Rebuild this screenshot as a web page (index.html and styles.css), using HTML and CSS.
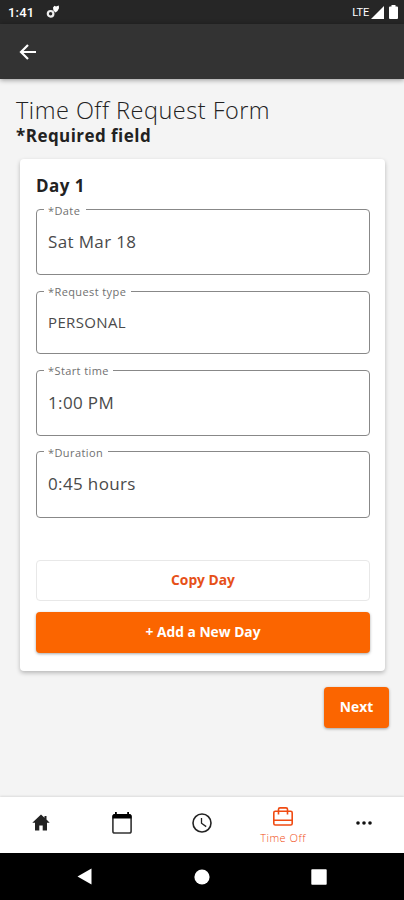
FILE: index.html
```html
<!DOCTYPE html>
<html lang="en">
<head>
<meta charset="utf-8">
<title>Time Off Request Form</title>
<link rel="stylesheet" href="styles.css">
</head>
<body>
<div class="screen">
  <div class="status">
    <span class="clock">1:41</span>
    <svg class="status-app" width="14" height="14" viewBox="0 0 14 14"><circle cx="4.600" cy="8.800" r="2.800" fill="none" stroke="#eee" stroke-width="2.200"/><path d="M7 2.500 8.500.8l1.500.7L12.800.6l.2 2.600L11.500 6l-2 1.500L7.400 5.400Z" fill="#fff"/></svg>
    <span class="lte">LTE</span>
    <svg class="signal" width="13" height="13" viewBox="0 0 13 13"><path d="M13 0v13H0Z" fill="#fff"/></svg>
    <svg class="battery" width="9" height="14" viewBox="0 0 9 14"><path d="M2.500 0h4v1.400H8q1 0 1 1V13q0 1-1 1H1q-1 0-1-1V2.400q0-1 1-1h1.500Z" fill="#fff"/></svg>
  </div>
  <header class="appbar">
    <svg width="18" height="16" viewBox="0 0 18 16" fill="none" stroke="#fff" stroke-width="2.200"><path d="M17 8H2M9 1 2 8l7 7"/></svg>
  </header>
  <main class="content">
    <h1 class="title">Time Off Request Form</h1>
    <p class="required">*Required field</p>
    <section class="card">
      <h2 class="day">Day 1</h2>
      <div class="field date"><span class="label">*Date</span><span class="value">Sat Mar 18</span></div>
      <div class="field type"><span class="label">*Request type</span><span class="value">PERSONAL</span></div>
      <div class="field start"><span class="label">*Start time</span><span class="value">1:00 PM</span></div>
      <div class="field duration"><span class="label">*Duration</span><span class="value">0:45 hours</span></div>
      <button class="btn copy">Copy Day</button>
      <button class="btn solid">+ Add a New Day</button>
    </section>
    <button class="btn solid next">Next</button>
  </main>
  <nav class="tabs">
    <a class="tab"><svg width="18" height="17" viewBox="0 0 18 17"><path d="M9 .5.3 8.700H3v7.800h4.300v-5h3.400v5H15V8.700h2.700L14.500 5.600V2h-2v1.700Z" fill="#222"/></svg></a>
    <a class="tab"><svg width="20" height="22" viewBox="0 0 20 22"><rect x=".9" y="3" width="18.200" height="18" rx="1.800" fill="none" stroke="#333" stroke-width="1.600"/><path d="M.5 6.500V4q0-2 2-2H3V0h1.800v2h10.400V0H17v2h.5q2 0 2 2v2.500Z" fill="#000"/></svg></a>
    <a class="tab"><svg width="20" height="20" viewBox="0 0 20 20" fill="none" stroke="#222" stroke-width="1.600"><circle cx="10" cy="10" r="9"/><path d="M9.500 5v5.200l4.700 3.400" stroke-width="1.300"/></svg></a>
    <a class="tab active"><svg width="20" height="19" viewBox="0 0 20 19" fill="none" stroke="#f04b12" stroke-width="1.600"><rect x=".8" y="4.300" width="18.400" height="13.700" rx="1.500"/><path d="M5.500 7.500V3M14.500 7.500V3M5.500 4V2.300Q5.500.9 7 .9h6q1.500 0 1.500 1.400V4M1 13.200h18"/></svg><span>Time Off</span></a>
    <a class="tab"><svg width="16" height="4" viewBox="0 0 16 4" fill="#111"><circle cx="2" cy="2" r="1.800"/><circle cx="8" cy="2" r="1.800"/><circle cx="14" cy="2" r="1.800"/></svg></a>
  </nav>
  <div class="sysnav">
    <svg width="15" height="17" viewBox="0 0 15 17"><path d="M14.500.5v16L.5 8.500Z" fill="#fff"/></svg>
    <svg width="16" height="16" viewBox="0 0 16 16"><circle cx="8" cy="8" r="7.600" fill="#fff"/></svg>
    <svg width="16" height="16" viewBox="0 0 16 16"><rect x=".3" y=".3" width="15.400" height="15.400" rx=".8" fill="#fff"/></svg>
  </div>
</div>
</body>
</html>
```
FILE: styles.css
```css
* { box-sizing: border-box; }
body { margin: 0; font-family: "Open Sans", "Noto Sans", sans-serif; color: #222; }
h1, h2, p { margin: 0; }
svg { display: block; flex: none; }
.screen { width: 404px; height: 900px; display: flex; flex-direction: column; background: #f4f4f4; overflow: hidden; }

.status { height: 24px; flex: none; background: #262626; color: #fff; display: flex; align-items: center; padding: 0 6px 0 8px; font-family: Roboto, sans-serif; }
.clock { font-size: 13px; font-weight: 500; width: 38px; letter-spacing: .2px; padding-top: 1px; }
.lte { margin-left: auto; font-size: 11px; letter-spacing: -.2px; }
.signal { margin: 0 5px 0 2px; }
.appbar { height: 55px; flex: none; background: #333; padding: 20px 0 0 19px; box-shadow: 0 1px 5px rgba(0,0,0,.4); }

.content { flex: 1; display: flex; flex-direction: column; padding: 15px 19px 0 20px; }
.title { margin-left: -4px; font-size: 23.500px; line-height: 32px; font-weight: 360; letter-spacing: .5px; white-space: nowrap; }
.required { margin-left: -4px; font-size: 17px; line-height: 20px; font-weight: 660; letter-spacing: .45px; }
.card { width: 365px; height: 512px; margin-top: 13px; padding: 16px 15px 18px 16px; background: #fff; border-radius: 4px; box-shadow: 0 2px 4px rgba(0,0,0,.25); display: flex; flex-direction: column; }
.day { font-size: 17px; line-height: 22px; font-weight: 660; letter-spacing: .45px; margin-bottom: 12px; }
.field { position: relative; border: 1px solid #888; border-radius: 4px; padding-left: 11px; display: flex; align-items: center; flex: none; }
.label { position: absolute; left: 7px; top: -7px; padding: 0 4px; background: #fff; font-size: 11px; line-height: 15px; letter-spacing: .4px; color: #707070; white-space: nowrap; }
.value { font-size: 17px; line-height: 24px; letter-spacing: .36px; color: #4a4a4a; }
.date { height: 66px; margin-bottom: 16px; }
.type { height: 63px; margin-bottom: 16px; padding-bottom: 2px; }
.start { height: 66px; margin-bottom: 15px; padding-bottom: 1px; }
.duration { height: 67px; margin-bottom: 42px; padding-bottom: 2px; }
.date .label { width: 42px; }
.type .label { width: 87px; top: -8px; }
.start .label { width: 69px; top: -8px; }
.duration .label { width: 64px; }
.type .value { font-size: 15px; }

.btn { height: 41px; flex: none; border: 0; border-radius: 4px; padding: 0 0 2px; font: 700 13.800px/18px "Open Sans", sans-serif; }
.copy { border: 1px solid #e8e8e8; background: #fff; color: #e65018; margin-bottom: 11px; }
.solid { background: #fb6500; color: #fff; box-shadow: 0 1px 3px rgba(0,0,0,.35); }
.next { width: 65px; align-self: flex-end; margin: 16px -4px 0 0; }

.tabs { height: 56px; flex: none; background: #fff; box-shadow: 0 -1px 2px rgba(0,0,0,.1); display: grid; grid-template-columns: repeat(5, 1fr); padding: 0 0 5px 1px; }
.tab { display: flex; flex-direction: column; align-items: center; justify-content: center; }
.active { color: #f04b12; font-size: 11px; line-height: 14px; font-weight: 300; letter-spacing: .5px; padding-top: 6px; }
.active span { margin-top: 5px; }
.sysnav { height: 47px; flex: none; background: #000; display: flex; align-items: center; justify-content: space-between; padding: 0 77px; }
```
